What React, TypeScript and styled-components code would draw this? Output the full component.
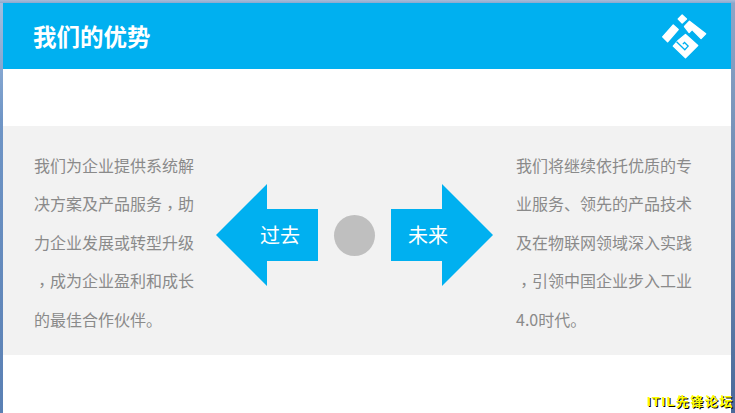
import styled, { createGlobalStyle } from 'styled-components';

const leftLines = [
  '我们为企业提供系统解',
  '决方案及产品服务，助',
  '力企业发展或转型升级',
  '，成为企业盈利和成长',
  '的最佳合作伙伴。',
];

const rightLines = [
  '我们将继续依托优质的专',
  '业服务、领先的产品技术',
  '及在物联网领域深入实践',
  '，引领中国企业步入工业',
  '4.0时代。',
];

// the full width comma sits in the middle of its cell in the original font
const renderLine = (line: string) =>
  line.split(/(，)/).map((part, i) => (part === '，' ? <Comma key={i}>，</Comma> : part));

const App = () => {
  return (
    <Page>
      <GlobalStyle />
      <Frame>
        <Header>
          <Title>我们的优势</Title>
          <svg width='48' height='47' viewBox='120 35 145 142'>
            <g fill='#fff' stroke='#fff' strokeWidth='4' strokeLinejoin='round'>
              <path d='M187 41l13 12-13 12-12-12z' />
              <path d='M209 60l49 38-14 14-27-27-9 9-14-18z' />
              <path d='M160 71l15 14-32 37-15-15z' />
              <path d='M197 100l37 33-37 37-37-35 15-17z' />
            </g>
            <path d='M170 122l25 24 10-11-11-11-5 5' fill='none' stroke='#00b0f0' strokeWidth='4' />
          </svg>
        </Header>
        <Band>
          <Copy>
            {leftLines.map((line) => (
              <p key={line}>{renderLine(line)}</p>
            ))}
          </Copy>
          <Timeline>
            <Arrow $flip>
              <svg width='102' height='102' viewBox='0 0 102 102'>
                <path d='M0 51L51 0v25h51v52H51v25z' fill='#00b0f0' />
              </svg>
              <span>过去</span>
            </Arrow>
            <Dot />
            <Arrow>
              <svg width='102' height='102' viewBox='0 0 102 102'>
                <path d='M102 51L51 0v25H0v52h51v25z' fill='#00b0f0' />
              </svg>
              <span>未来</span>
            </Arrow>
          </Timeline>
          <Copy>
            {rightLines.map((line) => (
              <p key={line}>{renderLine(line)}</p>
            ))}
          </Copy>
        </Band>
      </Frame>
      <Watermark>ITIL先锋论坛</Watermark>
    </Page>
  );
};
export default App;

const GlobalStyle = createGlobalStyle`
  html, body {
    margin: 0;
    padding: 0;
    overflow: hidden;
  }
  body {
    font-family: 'Noto Sans CJK SC', 'Liberation Sans', sans-serif;
  }
`;

const Page = styled.div`
  position: relative;
  width: 735px;
  height: 413px;
  overflow: hidden;
  box-sizing: border-box;
  padding: 3px 4px 0 3px;
  background:
    linear-gradient(180deg, #a9bcd8, #8aa8cf) top / 100% 3px no-repeat,
    linear-gradient(180deg, #a3bfe0 0, #6f95c6 120px, #5a80b4 100%) left / 3px 100% no-repeat,
    linear-gradient(180deg, #8da6c8 0, #4a6a9a 100%) right / 4px 100% no-repeat;
`;

const Frame = styled.div`
  display: flex;
  flex-direction: column;
  height: 410px;
  background: #fff;
`;

const Header = styled.header`
  display: flex;
  align-items: center;
  justify-content: space-between;
  height: 66px;
  padding: 0 23px 0 30px;
  background: #00b0f0;
`;

const Title = styled.h1`
  margin: 0;
  color: #fff;
  font-size: 23.5px;
  font-weight: 700;
  line-height: 62px;
`;

const Band = styled.section`
  display: grid;
  grid-template-columns: 182px 300px 1fr;
  align-items: center;
  height: 229px;
  margin-top: 57px;
  padding-left: 31px;
  background: #f2f2f2;
`;

const Copy = styled.div`
  padding-top: 3px;
  color: #8a8a8a;
  font-size: 16px;
  line-height: 38.4px;

  p {
    margin: 0;
    white-space: nowrap;
  }
`;

const Comma = styled.span`
  display: inline-block;
  font-family: 'Noto Sans CJK TC', sans-serif;
  transform: translateY(4px);
`;

const Timeline = styled.div`
  display: flex;
  align-items: center;
  gap: 16px;
  margin-bottom: 11px;
`;

const Arrow = styled.div<{ $flip?: boolean }>`
  position: relative;
  display: flex;
  width: 102px;
  height: 102px;

  span {
    position: absolute;
    top: 0;
    left: ${(p) => (p.$flip ? '44px' : '17px')};
    width: 40px;
    color: #fff;
    font-size: 20px;
    line-height: 102px;
    white-space: nowrap;
  }
`;

const Dot = styled.div`
  width: 41px;
  height: 41px;
  border-radius: 50%;
  background: #bfbfbf;
`;

const Watermark = styled.div`
  position: absolute;
  left: 647px;
  top: 393px;
  color: #ff0;
  font-family: 'Liberation Sans', 'Noto Sans CJK SC', sans-serif;
  font-size: 13px;
  font-weight: 700;
  letter-spacing: 1.5px;
  line-height: 18px;
  white-space: nowrap;
  text-shadow: 1px 1px 0 #000;
`;
